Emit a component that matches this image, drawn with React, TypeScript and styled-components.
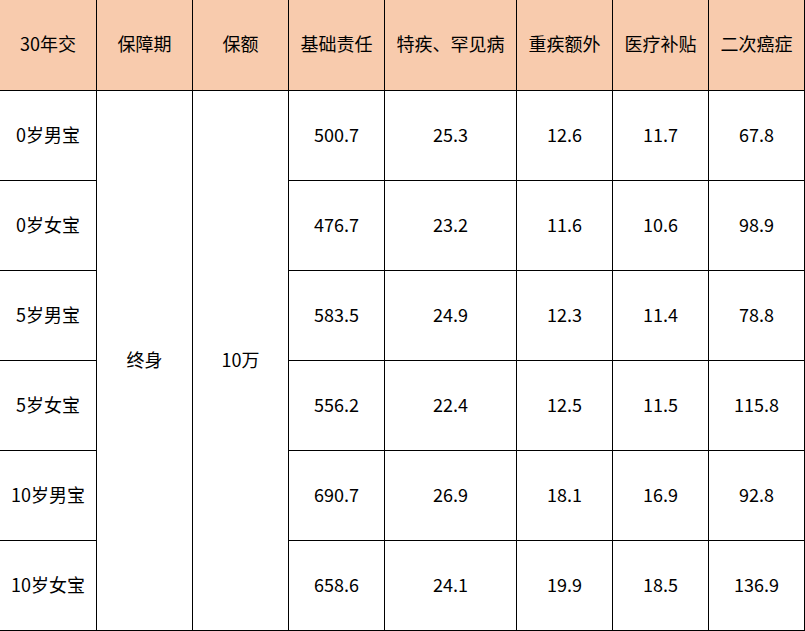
import React from 'react';
import styled, { createGlobalStyle } from 'styled-components';

const GlobalStyle = createGlobalStyle`
  html, body {
    margin: 0;
    padding: 0;
    background: #fff;
  }
  body {
    font-family: "Noto Sans CJK SC", "Noto Sans", sans-serif;
    color: #000;
  }
`;

const Sheet = styled.div`
  display: grid;
  grid-template-columns: 96px 95px 95px 95px 131px 95px 95px 95px;
  grid-template-rows: 90px repeat(6, 89px);
  gap: 1px;
  width: 805px;
  height: 631px;
  box-sizing: border-box;
  padding: 0 1px 1px 0;
  background: #000;
`;

const Cell = styled.div<{ $head?: boolean; $span?: number }>`
  display: flex;
  align-items: center;
  justify-content: center;
  padding-bottom: 4px;
  box-sizing: border-box;
  background: ${({ $head }) => ($head ? '#f8cbad' : '#fff')};
  font-size: 18px;
  line-height: 1;
  white-space: nowrap;
  grid-row: ${({ $span }) => ($span ? `span ${$span}` : 'auto')};
`;

const headers = ['30年交', '保障期', '保额', '基础责任', '特疾、罕见病', '重疾额外', '医疗补贴', '二次癌症'];

const rows = [
  { who: '0岁男宝', values: ['500.7', '25.3', '12.6', '11.7', '67.8'] },
  { who: '0岁女宝', values: ['476.7', '23.2', '11.6', '10.6', '98.9'] },
  { who: '5岁男宝', values: ['583.5', '24.9', '12.3', '11.4', '78.8'] },
  { who: '5岁女宝', values: ['556.2', '22.4', '12.5', '11.5', '115.8'] },
  { who: '10岁男宝', values: ['690.7', '26.9', '18.1', '16.9', '92.8'] },
  { who: '10岁女宝', values: ['658.6', '24.1', '19.9', '18.5', '136.9'] },
];

export default function App() {
  return (
    <>
      <GlobalStyle />
      <Sheet>
        {headers.map((h) => (
          <Cell $head key={h}>
            {h}
          </Cell>
        ))}
        {rows.map((row, i) => (
          <React.Fragment key={row.who}>
            <Cell>{row.who}</Cell>
            {i === 0 && (
              <>
                <Cell $span={6}>终身</Cell>
                <Cell $span={6}>10万</Cell>
              </>
            )}
            {row.values.map((v, j) => (
              <Cell key={j}>{v}</Cell>
            ))}
          </React.Fragment>
        ))}
      </Sheet>
    </>
  );
}
